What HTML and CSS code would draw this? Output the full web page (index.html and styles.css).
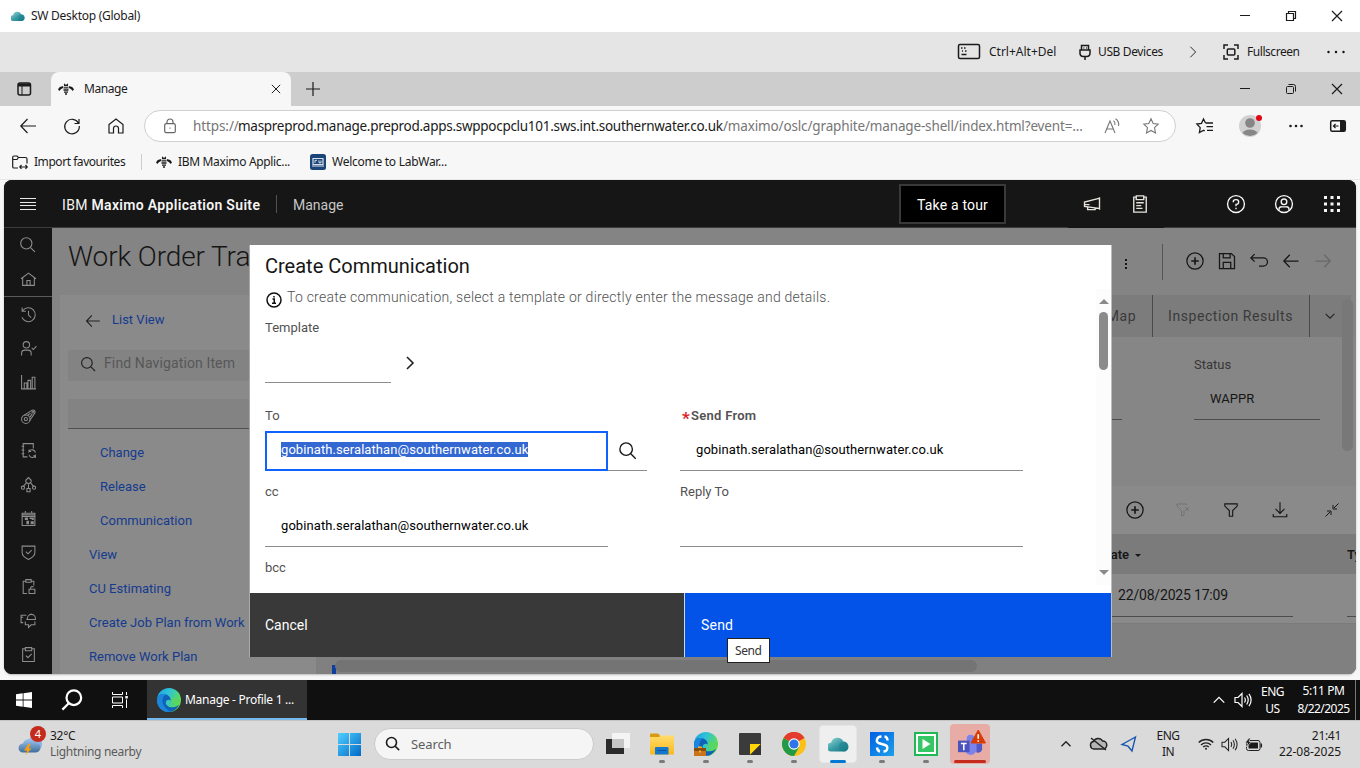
FILE: index.html
```html
<!DOCTYPE html>
<html lang="en">
<head>
<meta charset="utf-8">
<title>SW Desktop (Global)</title>
<link rel="stylesheet" href="styles.css">
</head>
<body>
<svg class="defs" aria-hidden="true">
  <defs>
    <linearGradient id="g-cloud" x1="0" y1="0" x2="1" y2="1"><stop offset="0" stop-color="#9adbd9"/><stop offset=".5" stop-color="#3f9fa8"/><stop offset="1" stop-color="#0d6f7d"/></linearGradient>
    <linearGradient id="g-edge" x1="0" y1="0" x2="1" y2=".4"><stop offset="0" stop-color="#1f9fe0"/><stop offset=".5" stop-color="#2fc3d8"/><stop offset="1" stop-color="#5fdc4f"/></linearGradient>
    <linearGradient id="g-win" x1="0" y1="0" x2="1" y2="1"><stop offset="0" stop-color="#4fd0ff"/><stop offset="1" stop-color="#0069c8"/></linearGradient>
    <linearGradient id="g-folder" x1="0" y1="0" x2="0" y2="1"><stop offset="0" stop-color="#ffdc6b"/><stop offset="1" stop-color="#fbb91c"/></linearGradient>
    <linearGradient id="g-blue" x1="0" y1="0" x2="1" y2="1"><stop offset="0" stop-color="#0060e6"/><stop offset="1" stop-color="#1ea0e8"/></linearGradient>
    <linearGradient id="g-storm" x1="0" y1="0" x2="0" y2="1"><stop offset="0" stop-color="#9fc4ee"/><stop offset="1" stop-color="#3f6f9c"/></linearGradient>
    <symbol id="min" viewBox="0 0 10 10"><path d="M0 5.5h10" class="s1"/></symbol>
    <symbol id="restore" viewBox="0 0 12 12"><path d="M1.5 3.5h7v7h-7zM3.5 3.5v-2h7v7h-2" class="s12"/></symbol>
    <symbol id="restore-r" viewBox="0 0 12 12"><rect x="1.5" y="3.5" width="7" height="7" rx="1" class="s1"/><path d="M3.5 1.5h5a2 2 0 0 1 2 2v5" class="s1"/></symbol>
    <symbol id="close" viewBox="0 0 12 12"><path d="M1 1l10 10M11 1L1 11" class="s12"/></symbol>
    <symbol id="bee" viewBox="0 0 16 12"><path d="M0 6.3L1.800 4 5.200 3l-.2 2L3.200 6 1.200 8zM16 6.300L14.200 4l-3.400-1 .2 2 1.800 1 2 2z" class="f"/><path d="M6 2.600h4M5.500 4.800h5M5.500 7h5M6 9.200h4M7 11h2M6.200.8l1 1.200M9.800.8l-1 1.200" class="bee-l"/></symbol>
    <symbol id="search" viewBox="0 0 32 32"><circle cx="13" cy="13" r="10"/><path d="M20.500 20.500L28.300 28.300"/></symbol>
    <symbol id="arrow-l" viewBox="0 0 32 32"><path d="M28 16H5M14 6L4.500 16 14 26"/></symbol>
    <symbol id="arrow-r" viewBox="0 0 32 32"><path d="M4 16h23M18 6l9.500 10L18 26"/></symbol>
    <symbol id="add" viewBox="0 0 32 32"><circle cx="16" cy="16" r="13"/><path d="M16 10v12M10 16h12" class="w3"/></symbol>
    <symbol id="chev-r" viewBox="0 0 16 16"><path d="M5 2l6 6-6 6"/></symbol>
    <symbol id="chev-u" viewBox="0 0 16 16"><path d="M2 11l6-6 6 6"/></symbol>
    <symbol id="speaker" viewBox="0 0 18 16"><path d="M1 5.500h3l4-4v13l-4-4H1zM10.500 5.500q1.700 2.500 0 5M12.700 3.500q3 4.500 0 9M15 1.800q4.200 6.200 0 12.400"/></symbol>
    <symbol id="edge" viewBox="0 0 24 24"><circle cx="12" cy="12" r="12" fill="url(#g-edge)"/><path d="M0 12C.5 6 6 5 9.500 6.500c3 1.300 4.300 3.500 4.200 6-1.500-1.600-4.700-1-5 1.800-.3 3 3.300 5.400 7.300 5 2.500-.2 4.500-1.300 6-2.500C20 21.500 16 24 12 24 5 24 0 18.500 0 12z" fill="#0f62b5"/><path d="M0 12C.5 6 6 5 9.500 6.500 5 8 4.500 14 7 18c1.500 2.400 4 4.500 6.500 6H12C5 24 0 18.500 0 12z" fill="#1b86dc"/><path d="M13.700 9.500c2.500 2 1 4 .5 5 .7 1.300 3 1.900 5.500 1 2.500-.9 3.800-2.500 4.200-4" fill="#58d565"/></symbol>
    <symbol id="cloud" viewBox="0 0 24 20"><path d="M3.500 18.500a5 5 0 0 1 0-10A7.500 7.500 0 0 1 17.500 7a6 6 0 0 1 2 11.500z" fill="url(#g-cloud)"/><circle cx="18" cy="13" r="5.500" fill="#1d8390" opacity=".55"/></symbol>
  </defs>
</svg>

<div class="screen">
  <div class="titlebar">
    <svg class="tb-logo"><use href="#cloud"/></svg>
    <span class="tb-name">SW Desktop (Global)</span>
    <div class="win-btns">
      <span><svg class="i10"><use href="#min"/></svg></span><span><svg class="i12"><use href="#restore"/></svg></span><span><svg class="i12"><use href="#close"/></svg></span>
    </div>
  </div>

  <div class="session-bar">
    <svg class="kbd" viewBox="0 0 24 18"><rect x="1.500" y="1.500" width="21" height="14" rx="1.500" class="s15"/><path d="M4 5h1.500M7 5h1.500M5 8h1M8 8h1.500M4.500 11.500h5" class="s15"/></svg>
    <span class="sb-cad">Ctrl+Alt+Del</span>
    <svg class="usb" viewBox="0 0 12 16"><path d="M2.500 6V1.500h7V6M1 6h10v3.500a3 3 0 0 1-3 3H4a3 3 0 0 1-3-3zM6 13v3M4.500 4h.8M7 4h.8" class="s15"/></svg>
    <span class="sb-usb">USB Devices</span>
    <svg class="sb-chev i14 ic"><use href="#chev-r"/></svg>
    <svg class="fs" viewBox="0 0 16 16"><path d="M1 5V1h4M11 1h4v4M15 11v4h-4M5 15H1v-4" class="s15"/><rect x="4.300" y="5" width="7.500" height="6" rx="1" class="s15"/></svg>
    <span class="sb-fs">Fullscreen</span>
    <svg class="sb-dots" viewBox="0 0 18 4"><circle cx="1.500" cy="2" r="1.200"/><circle cx="9" cy="2" r="1.200"/><circle cx="16.500" cy="2" r="1.200"/></svg>
  </div>

  <div class="tabstrip">
    <div class="tab-actions"><svg class="i14" viewBox="0 0 14 14"><rect x="1" y="1" width="12.500" height="12" rx="2" class="s15"/><path d="M1 3h12.500" class="s3"/><path d="M5 4v9" class="s1"/></svg></div>
    <div class="tab">
      <svg class="bee"><use href="#bee"/></svg><span class="tab-name">Manage</span>
      <svg class="i10 tab-x"><use href="#close"/></svg>
    </div>
    <svg class="plus" viewBox="0 0 14 14"><path d="M7 0v14M0 7h14" class="s12"/></svg>
    <div class="win-btns"><span><svg class="i10"><use href="#min"/></svg></span><span><svg class="i12"><use href="#restore-r"/></svg></span><span><svg class="i12"><use href="#close"/></svg></span></div>
  </div>

  <div class="addressbar">
    <div class="nav-btns">
      <span><svg viewBox="0 0 16 16"><path d="M16 8H1M7.500 1L.8 8l6.700 7"/></svg></span>
      <span><svg viewBox="0 0 16 16"><path d="M14.500 5.200A7.300 7.300 0 1 0 15.300 8M15 1v4.500h-4.500"/></svg></span>
      <span><svg viewBox="0 0 16 16"><path d="M1 6.500L8 1l7 5.500V15h-4.500v-4.500a2.500 2.500 0 0 0-5 0V15H1z"/></svg></span>
    </div>
    <div class="url">
      <svg class="lock" viewBox="0 0 12 16"><rect x=".7" y="5.700" width="10.600" height="9" rx="1.500"/><path d="M3 5.500V4a3 3 0 0 1 6 0v1.500M5.500 10.200h1"/></svg>
      <span class="u-scheme">https://</span><span class="u-host">maspreprod.manage.preprod.apps.swppocpclu101.sws.int.southernwater.co.uk</span><span class="u-path">/maximo/oslc/graphite/manage-shell/index.html?event=...</span>
      <svg class="read" viewBox="0 0 16 16"><path d="M1 15L6 3l5 12M2.800 11h6.500M9.500 2.800q2 1.500 1.500 4.200M11.500.8q4 2.700 3 7.200"/></svg>
      <svg class="star" viewBox="0 0 16 16"><path d="M8 .8l2.200 4.700 5 .7-3.700 3.500 1 5.200L8 12.400l-4.500 2.500 1-5.200L.8 6.200l5-.7z"/></svg>
    </div>
    <div class="ab-right">
      <svg class="ab-fav" viewBox="0 0 17 16"><path d="M9.500 5L7.500 1 5.500 5.300.8 6l3.400 3.600-.8 5 4.300-2.300 1 .5M9.500 5H17M10.500 8.700h6.500M11 12.300h6"/></svg>
      <div class="avatar"><svg viewBox="0 0 22 22"><circle cx="11" cy="11" r="11" fill="#d1d1d1"/><circle cx="11" cy="8" r="4.800" fill="#868686"/><path d="M3.500 18a8 5.500 0 0 1 15 0A11 11 0 0 1 3.500 18z" fill="#868686"/></svg><i class="dot"></i></div>
      <svg class="ab-dots" viewBox="0 0 14 4"><circle cx="1.500" cy="2" r="1.300"/><circle cx="7" cy="2" r="1.300"/><circle cx="12.500" cy="2" r="1.300"/></svg>
      <svg class="ab-side" viewBox="0 0 16 12"><rect x=".7" y=".7" width="14.600" height="10.600" rx="1.500" class="s15"/><path d="M10 1h5v10h-5z" class="f"/><path d="M8.500 6H3.500M5.500 4l-2 2 2 2" class="s12"/></svg>
    </div>
  </div>

  <div class="bookmarks">
    <svg class="bm-imp" viewBox="0 0 16 14"><path d="M6 13H2a1.300 1.300 0 0 1-1.300-1.300V2.300A1.300 1.300 0 0 1 2 1h3l1.500 1.500H13.500a1.500 1.500 0 0 1 1.500 1.500v4.500M1 4.500h4L6.500 2.500M8 12h7M9.500 10L7.800 12l1.700 1.800M13.500 10l1.700 2-1.700 1.800"/></svg>
    <span class="bm-1">Import favourites</span><i class="bm-sep"></i>
    <svg class="bee"><use href="#bee"/></svg><span class="bm-2">IBM Maximo Applic...</span>
    <svg class="lab" viewBox="0 0 16 16"><rect width="16" height="16" rx="2.500" fill="#1c4577"/><path d="M3 4.500h10v6H3zM2 12h12" fill="none" stroke="#d5e0ec" stroke-width="1.200"/><path d="M5 8.800V6.300h2M9 6.300v2.500h2V6.500" fill="none" stroke="#d5e0ec"/></svg>
    <span class="bm-3">Welcome to LabWar...</span>
  </div>

  <div class="frame-wrap"><div class="app">
    <header class="app-head">
      <svg class="burger" viewBox="0 0 16 12"><path d="M0 .5h16M0 4.500h16M0 7.500h16M0 11.500h16"/></svg>
      <span class="brand"><span class="br-ibm">IBM</span> <b>Maximo Application Suite</b></span>
      <i class="head-sep"></i><span class="product">Manage</span>
      <button class="tour">Take a tour</button>
      <div class="head-icons quiet">
        <span><svg viewBox="0 0 32 32"><path d="M28 5v20M27 7L4 13v7l23 3M9 21v4h12v-2.500M4 17h8"/></svg></span>
        <span><svg viewBox="0 0 32 32"><path d="M10 5H6v24h20V5h-4M10 3h12v6H10zM10 14h12M10 18.500h8M10 23h10"/></svg></span>
      </div>
      <div class="head-icons end">
        <span><svg viewBox="0 0 32 32"><circle cx="16" cy="16" r="13.500"/><path d="M11.500 13a4 4 0 0 1 4-4h1a3.800 3.800 0 0 1 0 7.600H16V19.500M16 22v2.500"/></svg></span>
        <span><svg viewBox="0 0 32 32"><circle cx="16" cy="16" r="13.500"/><circle cx="16" cy="12.500" r="4.500"/><path d="M8 26v-2a4 4 0 0 1 4-3.500h8a4 4 0 0 1 4 3.500v2"/></svg></span>
        <span><svg class="waffle" viewBox="0 0 16 16"><path d="M0 0h3v3H0zM6.500 0h3v3h-3zM13 0h3v3h-3zM0 6.500h3v3H0zM6.500 6.500h3v3h-3zM13 6.500h3v3h-3zM0 13h3v3H0zM6.500 13h3v3h-3zM13 13h3v3h-3z"/></svg></span>
      </div>
    </header>
    <div class="app-body">
      <nav class="rail">
        <span><svg><use href="#search"/></svg></span>
        <span><svg viewBox="0 0 32 32"><path d="M2 14.500L16 4l14 10.500M5 13v14h22V13M13 27v-9h6v9"/></svg></span>
        <i></i>
        <span><svg viewBox="0 0 32 32"><path d="M5 9a13 13 0 1 1-1.500 12M4 3v7h7M16 9v8l5 5" /></svg></span>
        <span><svg viewBox="0 0 32 32"><circle cx="12" cy="9" r="6"/><path d="M3 29v-4a6 6 0 0 1 6-6h6a6 6 0 0 1 6 6v4M22 15l3 3 6-6.500"/></svg></span>
        <span><svg viewBox="0 0 32 32"><path d="M3 2v26h27M8 28V17h5v11M15 28V12h5v16M23 28V6h5v22"/></svg></span>
        <span><svg viewBox="0 0 32 32"><circle cx="11" cy="21" r="8"/><circle cx="11" cy="21" r="3"/><path d="M8 13.500L23 4a4 4 0 0 1 5 5.500L18 24M15 13l5-3M19 17l4-6"/><circle cx="24.500" cy="7.500" r="2"/></svg></span>
        <span><svg viewBox="0 0 32 32"><path d="M14 28H6V3h19v9M3 8h5M3 15h5M3 22h5M29 20a6.500 6.500 0 0 0-12-2v-4M17 18h4M17 24a6.500 6.500 0 0 0 12 2v4M29 26h-4"/></svg></span>
        <span><svg viewBox="0 0 32 32"><path d="M11 8l5-5 5 5v3l-5 4-5-4zM16 15v8M12 13l-6 7M20 13l6 7"/><circle cx="5.500" cy="22" r="3"/><circle cx="26.500" cy="22" r="3"/><path d="M13 23.500h6v6h-6z"/></svg></span>
        <span><svg viewBox="0 0 32 32"><path d="M4 6h24v23H4zM4 9h24M10 2v5M22 2v5M4 12h24"/><path d="M9 14h6v5h-6zM18 14h8v5h-4v-2h-4zM12 20h5v7h-5zM20 21h6v6h-6z" class="solid"/></svg></span>
        <span><svg viewBox="0 0 32 32"><path d="M4 4h24v12c0 7-5 10-12 13C9 26 4 23 4 16zM11 14.500l4 4 7-7"/></svg></span>
        <span><svg viewBox="0 0 32 32"><path d="M13 29H6V6h5M21 6h5v8M11 3h10v5H11zM17 21h11v8H17zM20 21v-2a3 3 0 0 1 5.500-1.500"/></svg></span>
        <span><svg viewBox="0 0 32 32"><path d="M12 6H2v14h4M2 10h4M14 12a7.500 7.500 0 0 1 15 0v2H13zM21 5V3M10 18v6h6v5l5-5h7v-6"/></svg></span>
        <span><svg viewBox="0 0 32 32"><path d="M10 5H5v24h22V5h-5M10 3h12v6H10zM11 18l4 4 7-7"/></svg></span>
      </nav>
      <main class="page">
        <div class="page-head">
          <h1>Work Order Tra</h1>
          <svg class="kebab" viewBox="0 0 4 12"><path d="M1 1h2v2H1zM1 5h2v2H1zM1 9h2v2H1z"/></svg>
          <i class="vbar"></i>
          <div class="tools">
            <span><svg><use href="#add"/></svg></span>
            <span><svg viewBox="0 0 32 32"><path d="M4 4h19l5 5v19H4zM10 4v7h11V4M10 28V18h12v10"/></svg></span>
            <span><svg viewBox="0 0 32 32"><path d="M9 5L3 11l6 6M3 11h20a6 6 0 0 1 0 13H16"/></svg></span>
            <span><svg><use href="#arrow-l"/></svg></span>
            <span class="off"><svg><use href="#arrow-r"/></svg></span>
          </div>
        </div>
        <div class="page-cols">
          <aside class="side">
            <a class="back"><svg><use href="#arrow-l"/></svg>List View</a>
            <div class="find"><svg><use href="#search"/></svg>Find Navigation Item</div>
            <div class="select"></div>
            <a class="lvl2 n1">Change</a><a class="lvl2">Release</a><a class="lvl2">Communication</a>
            <a>View</a><a>CU Estimating</a><a>Create Job Plan from Work</a><a>Remove Work Plan</a>
          </aside>
          <section class="record">
            <div class="tabs">
              <span class="t-map">Map</span><span class="t-insp">Inspection Results</span>
              <span class="t-more"><svg viewBox="0 0 16 16"><path d="M3 5.500l5 5 5-5"/></svg></span>
            </div>
            <div class="fields">
              <div class="fld"></div>
              <div class="fld"><label>Status</label><p>WAPPR</p></div>
              <i class="vthumb"></i>
            </div>
            <div class="tbl-tools">
              <span><svg><use href="#add"/></svg></span>
              <span class="off"><svg viewBox="0 0 32 32"><path d="M18 17v9l-5 2V17L4 8V4h19v2M20 10l8 8M28 10l-8 8"/></svg></span>
              <span><svg viewBox="0 0 32 32"><path d="M5 5h22v4l-8 8v10h-6V17L5 9z"/></svg></span>
              <span class="w49"><svg viewBox="0 0 32 32"><path d="M16 2v20M8 14l8 8 8-8M4 23v5h24v-5"/></svg></span>
              <span class="w55"><svg viewBox="0 0 32 32"><path d="M29 3l-9 9M18 6v8h8M3 29l9-9M6 18h8v8"/></svg></span>
            </div>
            <div class="tbl-head"><b class="c-date">Date</b><i class="caret"></i><b class="c-type">Ty</b></div>
            <div class="tbl-row"><p class="cell-date">22/08/2025 17:09</p><p class="cell-type"></p></div>
            <div class="rest"><i class="mark"></i><i class="hthumb"></i></div>
          </section>
        </div>
      </main>
    </div>

    <div class="dialog">
      <div class="dlg-main">
        <div class="dlg-content">
          <h2>Create Communication</h2>
          <p class="hint"><svg viewBox="0 0 32 32"><circle cx="16" cy="16" r="14"/><path d="M13 14h3.500v8M12 22.500h8M16 8v3"/></svg>To create communication, select a template or directly enter the message and details.</p>
          <label class="lb-tpl">Template</label>
          <div class="tpl"><div class="input short"></div><svg class="ic"><use href="#chev-r"/></svg></div>
          <div class="grid">
            <div><label>To</label><div class="lookup"><div class="input focus"><mark>gobinath.seralathan@southernwater.co.uk</mark></div><span class="mag"><svg><use href="#search"/></svg></span></div></div>
            <div><label class="req"><em>*</em>Send From</label><div class="input">gobinath.seralathan@southernwater.co.uk</div></div>
            <div><label>cc</label><div class="input">gobinath.seralathan@southernwater.co.uk</div></div>
            <div><label>Reply To</label><div class="input"></div></div>
            <div><label>bcc</label></div>
          </div>
        </div>
        <div class="dlg-scroll"><i class="up"></i><i class="thumb"></i><i class="down"></i></div>
      </div>
      <div class="dlg-btns"><button class="cancel">Cancel</button><button class="send">Send</button></div>
      <div class="tip">Send</div>
    </div>
  </div></div>

  <div class="rtask">
    <span class="rt"><svg class="i16" viewBox="0 0 16 16"><path d="M0 2.300L6.700 1.300v6.300H0zM7.500 1.200L16 0v7.600H7.500zM0 8.400h6.700v6.300L0 13.700zM7.500 8.400H16V16l-8.500-1.200z" fill="#fff"/></svg></span>
    <span class="rt"><svg class="rt-mag" viewBox="0 0 24 24"><circle cx="14" cy="9.500" r="8"/><path d="M8.500 15.500L1.500 22.500"/></svg></span>
    <span class="rt"><svg class="i16 rt-tv" viewBox="0 0 16 16"><path d="M.5 0v2.500h10V0M.5 5h10v6H.5zM.5 16v-2.500h10V16M14.500 0v3M14.500 7.500V16"/><path d="M13.300 4h2.500v2.500h-2.500z" fill="#fff" stroke="none"/></svg></span>
    <div class="rt-app"><svg class="i24"><use href="#edge"/></svg><span>Manage - Profile 1 ...</span></div>
    <div class="rt-right">
      <svg class="i14 rt-up"><use href="#chev-u"/></svg>
      <svg class="spk"><use href="#speaker"/></svg>
      <p class="rt-lang">ENG<br>US</p><p class="rt-time">5:11 PM<br><span>8/22/2025</span></p><i class="peek"></i>
    </div>
  </div>

  <div class="htask">
    <div class="weather"><svg viewBox="0 0 24 20"><path d="M9 15a5 5 0 0 1 1-9 7 7 0 0 1 11.500-1A5.500 5.500 0 0 1 20 15z" fill="#8fb2e4"/><path d="M5 18a4.500 4.500 0 0 1 0-9 6.500 6.500 0 0 1 12-1 5 5 0 0 1 1 10z" fill="url(#g-storm)"/><path d="M10.500 9.500L6 16h3.200l-1.700 4.500 6-6.500h-3l2-4.500z" fill="#ff9d0a"/></svg><b>4</b></div>
    <p class="w-text"><span>32°C</span><br><em>Lightning nearby</em></p>
    <span class="ht ht-start"><svg class="i23" viewBox="0 0 23 23"><path d="M0 0h11v11H0zM12 0h11v11H12zM0 12h11v11H0zM12 12h11v11H12z" fill="url(#g-win)"/></svg></span>
    <div class="h-search"><svg><use href="#search"/></svg>Search</div>
    <span class="ht ht-tv"><svg class="i24" viewBox="0 0 24 24"><path d="M0 7h18v15H0z" fill="#2b2b2b"/><path d="M6 1h18v15H6z" fill="#f4f4f4"/><path d="M6 7h12v9H6z" fill="#c6c6c6"/></svg></span>
    <span class="ht run"><svg class="i24" viewBox="0 0 24 24"><path d="M0 2.500q0-1 1-1h7l2 2v4H0z" fill="#d99a10"/><path d="M0 5h9l2-1.500h13v19H0z" fill="url(#g-folder)"/><path d="M5 16q0-1 1-1h11.500q1 0 1 1v6.500H5z" fill="#1379cf"/><path d="M7.500 18.500h9" stroke="#0b5394"/></svg></span>
    <span class="ht run"><svg class="i24" viewBox="0 0 24 24"><use href="#edge" width="24" height="24"/><path d="M0 16h12v8H0z" fill="#c9741a"/><path d="M0 16h12v3H0z" fill="#8a4a0c"/><path d="M4 16v-1.500h4V16M5 18.500h2v2H5z" fill="#f3b13c"/></svg></span>
    <span class="ht run"><svg class="i22" viewBox="0 0 22 22"><rect width="22" height="22" rx="1" fill="#3b3b3b"/><path d="M11 11h11L11 22z" fill="#ffd60a"/><path d="M22 11v11H11z" fill="#333"/></svg></span>
    <span class="ht run"><svg class="i24" viewBox="0 0 24 24"><circle cx="12" cy="12" r="12" fill="#fbc116"/><path d="M12 12L1.600 6A12 12 0 0 1 22.400 6z" fill="#e33b2e"/><path d="M1.600 6A12 12 0 0 0 12 24l5.200-9L12 12z" fill="#229a48"/><path d="M1.600 6A12 12 0 0 1 22.400 6H12z" fill="#e33b2e"/><circle cx="12" cy="12" r="5.700" fill="#fff"/><circle cx="12" cy="12" r="4.600" fill="#2f74e8"/></svg></span>
    <span class="ht run active"><svg class="c22"><use href="#cloud"/></svg></span>
    <span class="ht run"><svg class="i24" viewBox="0 0 24 24"><path d="M0 0h24v24H0z" fill="url(#g-blue)"/><path d="M11.500 4.500C6 4.500 6 10 8.500 11l6.500 2c3.500 1 3 6.500-1.500 6.500M7 15.500q.5 3.500 3 4M14.500 4.500q3 .5 3 4" fill="none" stroke="#fff" stroke-width="2.400"/></svg></span>
    <span class="ht run"><svg class="i24" viewBox="0 0 24 24"><path d="M0 0h24v24H0z" fill="#20b855"/><path d="M3 3h18v18H3z" fill="#35c766" stroke="#fff" stroke-width="2"/><path d="M8.500 7v10l8-5z" fill="#fff"/></svg></span>
    <span class="ht run alert"><svg class="teams" viewBox="0 0 30 28"><circle cx="14" cy="9" r="4" fill="#7b83eb"/><path d="M9 13h11v8a6 6 0 0 1-11 2z" fill="#7b83eb"/><path d="M20 14h6v6a4 4 0 0 1-6 3z" fill="#5059c9"/><path d="M1 11h12v12H1z" fill="#4b53bc"/><path d="M4 14h6M7 14v7" stroke="#fff" stroke-width="1.600"/><path d="M22 0l7.500 13.500h-15z" fill="#d83b01" stroke="#d83b01" stroke-linejoin="round"/><path d="M22 4.500v4.500M22 10.500v1.700" stroke="#fff" stroke-width="1.700"/></svg></span>
    <div class="h-tray">
      <svg class="i12 h-up"><use href="#chev-u"/></svg>
      <svg class="h-cloud" viewBox="0 0 18 14"><path d="M5 12a3.800 3.800 0 0 1-.5-7.500A5 5 0 0 1 13.500 4 3.900 3.900 0 0 1 14 12z" fill="#b5b5b5"/><path d="M2 1l15 12"/></svg>
      <svg class="h-loc" viewBox="0 0 16 16"><path d="M14.500 1L1 8.500l6 1.700L11 15z"/></svg>
      <p class="h-lang">ENG<br>IN</p>
      <svg class="h-wifi" viewBox="0 0 16 12"><path d="M.7 4.500a10.500 10.500 0 0 1 14.600 0M3 6.900a7.200 7.200 0 0 1 10 0M5.200 9.100a4 4 0 0 1 5.600 0"/><circle cx="8" cy="10.800" r="1" fill="#222" stroke="none"/></svg>
      <svg class="spk h-spk"><use href="#speaker"/></svg>
      <svg class="h-bat" viewBox="0 0 17 13"><rect x="3.500" y="4.500" width="9.500" height="6" rx=".5" class="f" stroke="none"/><rect x="1.500" y="2.500" width="13.500" height="10" rx="2"/><path d="M16.300 5.500v4" stroke-width="1.500"/><path d="M4 0L0 5h2.500L1.500 9 6.500 3.500H4L5.500 0z" fill="#1b1b1b" stroke="#dcdcdc" stroke-width=".7"/></svg>
      <p class="h-time"><span>21:41</span><br>22-08-2025</p>
    </div>
  </div>
</div>
</body>
</html>
```
FILE: styles.css
```css
* { box-sizing: border-box; }
body { margin: 0; font: 12px/16px "Noto Sans", "Open Sans", sans-serif; color: #1b1b1b; overflow: hidden; }
p, h1, h2 { margin: 0; font-weight: 400; }
button { border: 0; padding: 0; margin: 0; font: inherit; color: inherit; background: none; }
i, em { font-style: normal; }
svg { display: block; flex: none; fill: none; overflow: visible; }
span { white-space: nowrap; }
.defs { position: absolute; width: 0; height: 0; }
.screen { width: 1360px; height: 768px; display: flex; flex-direction: column; background: #fff; }

.s1, .s12, .s15, .s3, .bee-l { fill: none; stroke: #1b1b1b; stroke-width: 1; }
.s12 { stroke-width: 1.2; }
.s15 { stroke-width: 1.5; }
.s3 { stroke-width: 3; }
.bee-l { stroke-width: 1.3; }
.f { fill: #1b1b1b; }
.i10 { width: 10px; height: 10px; }
.i12 { width: 12px; height: 12px; }
.i14 { width: 14px; height: 14px; }
.i16 { width: 16px; height: 16px; }
.i22 { width: 22px; height: 22px; }
.i23 { width: 23px; height: 23px; }
.i24 { width: 24px; height: 24px; }
.ic { stroke: #222; stroke-width: 1.3; }

/* client window */
.titlebar { height: 32px; display: flex; align-items: center; padding-left: 11px; }
.tb-logo { width: 14px; height: 12px; margin-right: 6px; }
.tb-name { letter-spacing: -.27px; }
.win-btns { display: flex; margin-left: auto; }
.win-btns span { width: 46px; display: flex; justify-content: center; }
.session-bar { height: 40px; display: flex; align-items: center; background: #e5e5e5; padding-left: 957px; }
.kbd { width: 24px; height: 18px; margin-right: 8px; }
.sb-cad { width: 90px; letter-spacing: 0; }
.usb { width: 12px; height: 16px; margin-right: 7px; }
.sb-usb { width: 88px; letter-spacing: -.37px; }
.sb-chev { margin-right: 23px; stroke-width: 1.1; }
.fs { width: 16px; height: 16px; margin-right: 8px; }
.sb-fs { width: 80px; letter-spacing: -.45px; }
.sb-dots { width: 18px; height: 4px; fill: #111; }

/* browser */
.tabstrip { height: 34px; display: flex; align-items: center; background: #cdcdcd; }
.tab-actions { width: 51px; height: 34px; padding: 10px 0 0 17px; }
.tab { width: 240px; height: 34px; display: flex; align-items: center; padding: 0 10px 0 7px; border-radius: 8px 8px 0 0; background: #f7f7f7; }
.bee { width: 16px; height: 12px; margin-right: 10px; }
.tab-name { letter-spacing: -.45px; }
.tab-x { margin-left: auto; }
.plus { width: 14px; height: 14px; margin-left: 14.5px; }
.addressbar { height: 40px; display: flex; align-items: center; background: #f7f7f7; }
.nav-btns { display: flex; padding-left: 6px; width: 144px; }
.nav-btns span { width: 44px; display: flex; justify-content: center; }
.nav-btns svg { width: 16px; height: 16px; stroke: #1b1b1b; stroke-width: 1.2; }
.url { width: 1032px; height: 32px; display: flex; align-items: center; border: 1px solid #d0d0d0; border-radius: 16px; background: #fff; padding-left: 19px; font-size: 13.5px; color: #767676; }
.lock { width: 12px; height: 16px; stroke: #666; stroke-width: 1.2; margin-right: 17px; }
.u-scheme { width: 45px; letter-spacing: -.1px; }
.u-host { width: 485px; color: #1b1b1b; letter-spacing: -.28px; }
.u-path { width: 381px; letter-spacing: -.15px; }
.read { width: 16px; height: 16px; stroke: #777; stroke-width: 1.1; margin-right: 23px; }
.star { width: 16px; height: 16px; stroke: #777; stroke-width: 1.1; }
.ab-right { display: flex; align-items: center; padding-left: 20px; }
.ab-fav { width: 17px; height: 16px; stroke: #1b1b1b; stroke-width: 1.3; margin-right: 26px; }
.avatar { position: relative; width: 22px; height: 22px; margin-right: 28px; }
.avatar svg { width: 22px; height: 22px; }
.dot { position: absolute; top: 0; right: -1px; width: 6px; height: 6px; border-radius: 50%; background: #e30613; }
.ab-dots { width: 14px; height: 4px; fill: #1b1b1b; margin-right: 27px; }
.ab-side { width: 16px; height: 12px; }
.bookmarks { height: 34px; display: flex; align-items: center; background: #f7f7f7; padding: 0 0 2px 12px; border-bottom: 1px solid #e9e9e9; }
.bm-imp { width: 16px; height: 14px; stroke: #1b1b1b; stroke-width: 1.2; margin-right: 6px; }
.bm-1 { width: 107px; letter-spacing: -.45px; }
.bm-sep { width: 1px; height: 16px; background: #ccc; margin-right: 14px; }
.bookmarks .bee { margin-right: 6px; }
.bm-2 { width: 132px; letter-spacing: -.33px; }
.lab { width: 16px; height: 16px; margin-right: 6px; }
.bm-3 { letter-spacing: -.27px; }

/* application */
.frame-wrap { height: 500px; padding: 0 4px 6px; background: #f7f7f7; }
.app { position: relative; height: 494px; border-radius: 8px; overflow: hidden; display: flex; flex-direction: column; background: #161616; font-family: Roboto, "Noto Sans", sans-serif; font-size: 13px; box-shadow: 0 1px 2px #bbb; }
.app-head { height: 48px; flex: none; display: flex; align-items: center; background: linear-gradient(#161616 47px, #3c3c3c 47px); padding-left: 16px; color: #f4f4f4; font-size: 14px; }
.burger { width: 16px; height: 12px; stroke: #e8e8e8; margin-right: 26px; }
.brand { width: 214px; padding-top: 1px; }
.br-ibm { letter-spacing: .41px; }
.brand b { font-weight: 600; letter-spacing: .33px; }
.head-sep { width: 1px; height: 18px; background: #525252; margin-right: 16px; }
.product { color: #c6c6c6; width: 606px; padding-top: 1px; }
.tour { width: 107px; height: 40px; border: 2px solid #393939; background: #000; color: #fff; letter-spacing: .18px; margin-right: 62px; padding-top: 1px; }
.head-icons { display: flex; height: 48px; align-items: center; }
.head-icons span { width: 48px; display: flex; justify-content: center; }
.head-icons svg { width: 20px; height: 20px; stroke: #f4f4f4; stroke-width: 2.2; }
.head-icons .waffle { width: 16px; height: 16px; fill: #f4f4f4; stroke: none; }
.quiet { background: #161616; }
.quiet svg { stroke: #e6e3dd; }
.end { margin-left: 48px; }
.app-body { flex: 1; display: flex; min-height: 0; }
.rail { width: 48px; flex: none; background: #161616; }
.rail span { height: 34px; display: flex; align-items: center; justify-content: center; }
.rail i { display: block; height: 1px; background: #5a5a5a; }
.rail svg { width: 17px; height: 17px; stroke: #8d8d8d; stroke-width: 2; }
.rail span:first-child svg { width: 18px; height: 18px; }
.solid { fill: #8d8d8d; stroke: none; }

.page { width: 1304px; background: #848484; color: #161616; }
.page-head { height: 67px; display: flex; align-items: flex-start; padding: 0 17px 0 16px; }
h1 { font-size: 28px; line-height: 36px; font-weight: 300; margin-top: 11px; width: 1057px; letter-spacing: -.11px; white-space: nowrap; }
.kebab { width: 4px; height: 12px; fill: #161616; margin: 30px 34px 0 -1px; }
.vbar { width: 1px; height: 36px; background: #555; margin: 16px 16px 0 0; }
.tools { display: flex; padding-top: 23px; }
.tools span { width: 32px; display: flex; justify-content: center; }
.tools svg, .tbl-tools svg { width: 20px; height: 20px; stroke: #161616; stroke-width: 2; }
.w3 { stroke-width: 2.6; }
.tools .off svg { stroke: #686868; }
.page-cols { display: flex; height: 379px; }
.side { width: 256px; margin-left: 8px; background: #8a8a8a; display: flex; flex-direction: column; font-size: 13px; }
.side a { color: #153b8e; height: 34px; line-height: 34px; padding-left: 29px; flex: none; white-space: nowrap; }
.side .lvl2 { padding-left: 40px; }
.side .n1 { margin-top: 7px; }
.side .back { display: flex; align-items: center; padding-left: 24px; margin-top: 8px; }
.back svg { width: 18px; height: 18px; stroke: #222; stroke-width: 2; margin: 2px 10px 0 0; }
.find { height: 34px; margin: 13px 0 0 8px; background: #838383; display: flex; align-items: center; padding: 0 0 4px 12px; font-size: 14px; letter-spacing: .12px; color: #575757; }
.find svg { width: 17px; height: 17px; stroke: #222; stroke-width: 2.2; margin: 2px 7px 0 0; }
.select { height: 34px; margin: 18px 0 0 8px; background: #838383; border-bottom: 1px solid #515151; }
.record { width: 1040px; display: flex; flex-direction: column; background: #868686; }
.tabs { height: 42px; display: flex; justify-content: flex-end; padding-right: 5px; background: linear-gradient(90deg, #7c7c7c 1035px, #848484 1035px); font-size: 14px; line-height: 42px; color: #3a3a3a; letter-spacing: .5px; }
.t-map { padding-right: 16px; border-right: 1px solid #4a4a4a; }
.t-insp { width: 157px; padding-left: 15px; border-right: 1px solid #4a4a4a; letter-spacing: .57px; }
.t-more { width: 41px; display: flex; align-items: center; justify-content: center; }
.t-more svg { width: 14px; height: 14px; stroke: #222; stroke-width: 1.2; margin-right: 1px; }
.fields { height: 149px; display: flex; justify-content: flex-end; align-items: flex-start; gap: 72px; padding-right: 3px; }
.fld { width: 126px; height: 83px; border-bottom: 1px solid #4c4c4c; padding-top: 20px; }
.fld label { color: #363636; line-height: 16px; display: block; }
.fld p { padding: 18px 0 0 16px; }
.vthumb { width: 11px; height: 152px; margin: -38px 0 0 -50px; border-radius: 6px; background: #787878; }
.tbl-tools { height: 48px; background: #8a8a8a; display: flex; justify-content: flex-end; align-items: center; }
.tbl-tools span { width: 48px; display: flex; justify-content: center; }
.tbl-tools svg { width: 18px; height: 18px; }
.tbl-tools span:first-child svg { width: 20px; height: 20px; }
.tbl-tools .off svg { stroke: #737373; width: 16px; height: 16px; }
.tbl-tools .w49 { width: 49px; }
.tbl-tools .w55 { width: 52px; padding-left: 4px; }
.tbl-tools .w55 svg { width: 16px; height: 16px; }
.tbl-head { height: 40px; background: #7b7b7b; display: flex; justify-content: flex-end; align-items: center; overflow: hidden; padding-top: 2px; }
.tbl-head b { font-weight: 600; }
.caret { border: 3px solid transparent; border-top-color: #161616; border-bottom: 0; margin: 1px 206px 0 6px; }
.c-type { width: 9px; overflow: hidden; }
.tbl-row { height: 50px; background: #8a8a8a; border-bottom: 1px solid #7b7b7b; display: flex; justify-content: flex-end; gap: 54px; font-size: 14px; line-height: 43px; letter-spacing: -.18px; }
.cell-date { width: 191px; height: 43px; padding-left: 16px; border-bottom: 1px solid #4c4c4c; }
.cell-type { width: 9px; height: 43px; border-bottom: 1px solid #4c4c4c; }
.rest { flex: 1; background: #808080; display: flex; padding: 35px 0 0 16px; }
.mark { width: 4px; height: 9px; margin-top: 6px; background: #0f3f9e; }
.hthumb { width: 642px; height: 12px; border-radius: 6px; background: #747474; margin: 1px 0 0 -1px; }

/* dialog */
.dialog { position: absolute; left: 245px; top: 65px; width: 863px; height: 412px; background: #fff; border-right: 1px solid #bdbdbd; display: flex; flex-direction: column; border-left: 1px solid #a9a9a9; }
.dlg-main { height: 348px; display: flex; }
.dlg-content { width: 846px; padding: 10px 0 0 15px; }
h2 { font-size: 20px; line-height: 22px; color: #161616; }
.hint { display: flex; align-items: center; height: 20px; margin-top: 10px; font-size: 14px; font-weight: 300; letter-spacing: .24px; color: #525252; white-space: nowrap; }
.hint svg { width: 16px; height: 16px; stroke: #111; stroke-width: 3; margin: 6px 5px 0 1px; }
.dlg-content label { display: block; height: 16px; line-height: 16px; margin-bottom: 7px; color: #525252; }
.dlg-content .lb-tpl { margin: 13px 0 7px; }
.tpl { display: flex; align-items: center; height: 40px; }
.tpl svg { width: 16px; height: 16px; margin-left: 11px; stroke-width: 1.6; }
.input { height: 40px; width: 343px; border-bottom: 1px solid #8d8d8d; padding-left: 16px; line-height: 37px; color: #000; letter-spacing: .08px; white-space: nowrap; }
.dlg-content .input.short { width: 126px; }
.grid { display: grid; grid-template-columns: 415px 343px; row-gap: 13px; margin-top: 25px; }
.lookup { display: flex; }
.focus { border: 2px solid #0f62fe; padding-left: 14px; line-height: 34px; }
mark { background: #3367d1; color: #fff; padding: 0; }
.mag { width: 39px; border-bottom: 1px solid #8d8d8d; display: flex; align-items: center; justify-content: center; padding-left: 1px; }
.mag svg { width: 20px; height: 20px; stroke: #161616; stroke-width: 2.2; }
.dlg-content .req { font-weight: 600; letter-spacing: .28px; }
.req em { color: #da1e28; display: inline-block; width: 11px; padding-left: 2px; font-size: 17px; line-height: 0; vertical-align: -4px; font-weight: 700; }
.dlg-scroll { width: 15px; height: 296px; margin-top: 44px; background: #fcfcfc; display: flex; flex-direction: column; align-items: center; padding: 10px 0; }
.up { border: 5px solid transparent; border-bottom-color: #8a8a8a; border-top: 0; }
.thumb { width: 9px; height: 58px; border-radius: 5px; background: #8b8b8b; margin-top: 8px; }
.down { border: 5px solid transparent; border-top-color: #8a8a8a; border-bottom: 0; margin-top: auto; }
.dlg-btns { height: 64px; display: flex; color: #fff; font-size: 14px; }
.dlg-btns button { text-align: left; padding: 0 0 1px 15px; }
.cancel { width: 434px; background: #393939; }
.dlg-btns .send { flex: 1; background: #0353e9; border-left: 1px solid #cfd6e6; letter-spacing: .2px; padding-left: 16px; }
.tip { position: absolute; left: 477px; top: 393px; width: 43px; height: 25px; border: 1px solid #222; background: #fff; color: #333; font: 12px/24px "Noto Sans", sans-serif; letter-spacing: -.4px; padding-left: 7px; }

/* session taskbar */
.rtask { height: 40px; display: flex; background: #101010; color: #fff; }
.rt { width: 48px; display: flex; align-items: center; justify-content: center; }
.rt-mag { width: 22px; height: 22px; stroke: #fff; stroke-width: 2.4; }
.rt-tv { stroke: #fff; }
.rt-app { width: 160px; margin-left: 3px; display: flex; align-items: center; gap: 4px; padding-left: 10px; background: #333; border-bottom: 2px solid #76b9ed; letter-spacing: -.28px; white-space: nowrap; }
.rt-app svg, .rt-app span { margin-top: 1px; }
.rt-right { margin-left: auto; display: flex; align-items: center; width: 148px; }
.rt-up { stroke: #fff; stroke-width: 1.5; margin-right: 8px; }
.spk { width: 18px; height: 16px; stroke: #fff; stroke-width: 1.2; }
.rt-lang { width: 41px; text-align: center; line-height: 17px; letter-spacing: -.5px; }
.rt-time { width: 61px; text-align: center; line-height: 18px; letter-spacing: -.44px; }
.rt-time span { letter-spacing: -.55px; }
.peek { width: 1px; height: 40px; background: #777; margin-left: 1px; }

/* host taskbar */
.htask { height: 48px; display: flex; align-items: center; background: #dadada; box-shadow: inset 0 1px #c4c4c4; }
.weather { position: relative; width: 32px; margin-left: 18px; height: 42px; padding-top: 11px; }
.weather svg { width: 24px; height: 21px; }
.weather b { position: absolute; left: 12px; top: 3px; width: 16px; height: 16px; border-radius: 50%; background: #c42b1c; color: #fff; font-weight: 400; font-size: 11px; line-height: 16px; text-align: center; }
.w-text { width: 277px; line-height: 16px; }
.w-text em { color: #5a5a5a; letter-spacing: -.3px; }
.w-text span { letter-spacing: -.3px; }
.ht { width: 44px; height: 40px; display: flex; align-items: center; justify-content: center; }
.h-search { width: 220px; height: 32px; margin: 0 2px 0 3px; border-radius: 16px; border: 1px solid #cbcbcb; background: #f5f5f5; display: flex; align-items: center; padding: 0 0 0 10px; font-size: 13px; letter-spacing: -.1px; color: #5d5d5d; }
.h-search svg { width: 16px; height: 16px; stroke: #1b1b1b; stroke-width: 3.2; margin-right: 10px; }
.run { position: relative; }
.run::after { content: ""; position: absolute; bottom: 1px; left: 19px; width: 6px; height: 3px; border-radius: 2px; background: #7a7a7a; }
.active::before, .alert::before { content: ""; position: absolute; inset: 1px 3px; border-radius: 4px; background: #efefef; border: 1px solid #e6e6e6; }
.active svg, .alert svg { position: relative; }
.active::after { left: 14px; width: 16px; background: #0078d4; }
.alert::before { background: #e8aca6; border: 0; inset: 0 2px; }
.alert::after { left: 6px; width: 32px; background: #c42b1c; }
.c22 { width: 21px; height: 18px; }
.teams { width: 29px; height: 27px; margin: -2px 0 0 2px; }
.h-tray { margin-left: auto; width: 300px; display: flex; align-items: center; stroke: #222; }
.h-tray p { stroke: none; line-height: 16px; }
.h-up { stroke-width: 1.8; margin-right: 17px; }
.h-cloud { width: 18px; height: 14px; stroke-width: 1.5; margin-right: 14px; }
.h-loc { width: 16px; height: 16px; stroke: #1a56b0; stroke-width: 1.4; margin-right: 15px; }
.h-lang { width: 32px; text-align: center; letter-spacing: -.5px; margin-right: 14px; }
.h-wifi { width: 16px; height: 12px; stroke-width: 1.4; margin-right: 7px; }
.h-spk { width: 17px; height: 15px; stroke: #222; stroke-width: 1.1; margin-right: 7px; }
.h-bat { width: 17px; height: 13px; stroke-width: 1; }
.h-time { flex: 1; text-align: right; padding-right: 19px; letter-spacing: -.06px; }
.h-time span { letter-spacing: -.3px; }
```
